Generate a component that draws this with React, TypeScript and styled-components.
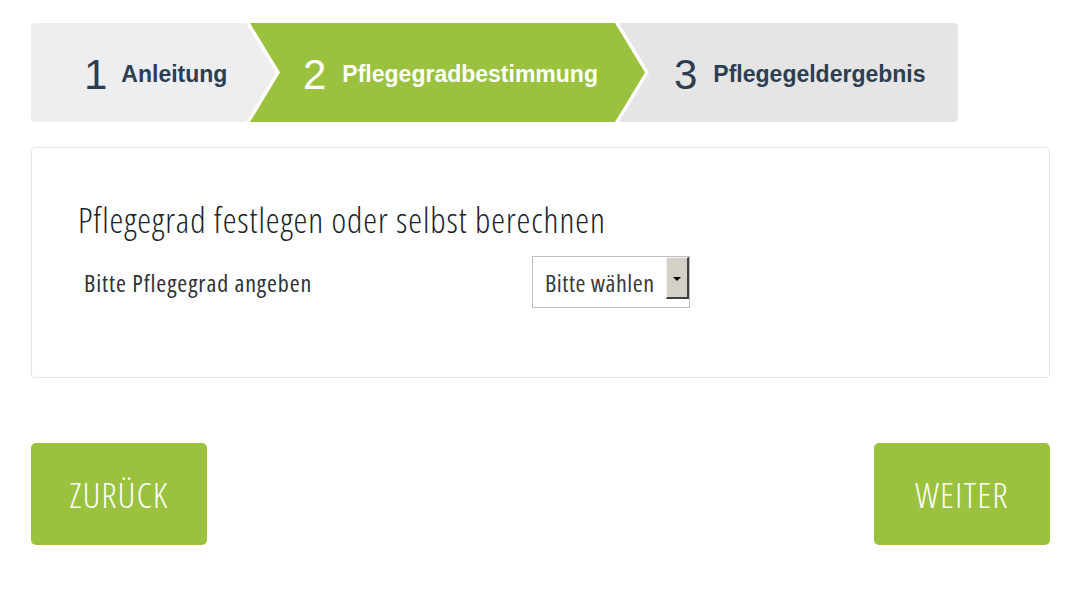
import React from "react";
import styled, { createGlobalStyle } from "styled-components";

const GlobalStyle = createGlobalStyle`
  html, body { margin: 0; padding: 0; background: #ffffff; }
  body { font-family: "Liberation Sans", Arial, sans-serif; }
`;

const GREEN = "#9ac23f";
const DEPTH = 30;

const Page = styled.div`
  width: 1072px;
  height: 590px;
  box-sizing: border-box;
  padding: 23px 22px 0 31px;
  display: flex;
  flex-direction: column;
`;

const Stepper = styled.div`
  display: flex;
  width: 928px;
  height: 99px;
`;

const Step = styled.div<{ $bg: string; $w: number; $first?: boolean; $last?: boolean; $active?: boolean }>`
  flex: 0 0 ${(p) => p.$w}px;
  height: 100%;
  box-sizing: border-box;
  padding-left: ${(p) => (p.$last ? 55 : 53)}px;
  padding-top: 3px;
  margin-left: ${(p) => (p.$first ? 0 : -26)}px;
  display: flex;
  align-items: center;
  gap: ${(p) => (p.$first ? 14 : 16)}px;
  background: ${(p) => p.$bg};
  color: ${(p) => (p.$active ? "#ffffff" : "#2c3e50")};
  border-radius: ${(p) => (p.$first ? "4px 0 0 4px" : p.$last ? "0 4px 4px 0" : "0")};
  clip-path: ${(p) =>
    p.$last
      ? `polygon(0 0, 100% 0, 100% 100%, 0 100%, ${DEPTH}px 50%)`
      : p.$first
      ? `polygon(0 0, calc(100% - ${DEPTH}px) 0, 100% 50%, calc(100% - ${DEPTH}px) 100%, 0 100%)`
      : `polygon(0 0, calc(100% - ${DEPTH}px) 0, 100% 50%, calc(100% - ${DEPTH}px) 100%, 0 100%, ${DEPTH}px 50%)`};
`;

const StepNum = styled.span`
  font-family: "Liberation Sans", Arial, sans-serif;
  font-size: 42px;
  font-weight: 400;
  line-height: 1;
  margin-top: 2px;
`;

const StepLabel = styled.span`
  font-family: "Liberation Sans", Arial, sans-serif;
  font-size: 23px;
  font-weight: 700;
  line-height: 1;
`;

const Card = styled.div`
  margin-top: 25px;
  width: 1019px;
  height: 231px;
  box-sizing: border-box;
  border: 1px solid #e6e6e6;
  border-radius: 4px;
  padding: 50px 46px 0 46px;
`;

const Condensed = `
  font-family: "Open Sans", sans-serif;
  font-stretch: 75%;
`;

const Title = styled.h2`
  ${Condensed}
  font-weight: 300;
  margin: 0;
  font-size: 35px;
  letter-spacing: 0.9px;
  line-height: 44px;
  color: #202329;
`;

const FieldRow = styled.div`
  display: flex;
  align-items: center;
  margin-top: 14px;
`;

const FieldLabel = styled.label`
  ${Condensed}
  font-weight: 400;
  width: 448px;
  padding-left: 6px;
  font-size: 24px;
  letter-spacing: 0.9px;
  color: #2f3237;
`;

const Select = styled.div`
  display: flex;
  align-items: flex-start;
  width: 158px;
  height: 52px;
  box-sizing: border-box;
  border: 1px solid #bfbfbf;
  background: #fff;
`;

const SelectText = styled.span`
  ${Condensed}
  font-weight: 400;
  flex: 1;
  height: 100%;
  display: flex;
  align-items: center;
  padding-left: 12px;
  font-size: 24px;
  letter-spacing: 0.5px;
  color: #3a3a3a;
`;

const SelectButton = styled.span`
  width: 23px;
  height: 42px;
  box-sizing: border-box;
  background: #d4d0c8;
  border-top: 1px solid #f4f2ee;
  border-left: 1px solid #f4f2ee;
  border-right: 2px solid #404040;
  border-bottom: 2px solid #404040;
  display: flex;
  align-items: center;
  justify-content: center;
`;

const Arrow = styled.span`
  width: 0;
  height: 0;
  border-left: 4px solid transparent;
  border-right: 4px solid transparent;
  border-top: 4px solid #000;
  margin-top: 2px;
`;

const Buttons = styled.div`
  margin-top: 65px;
  width: 1019px;
  display: flex;
  justify-content: space-between;
`;

const Button = styled.button`
  ${Condensed}
  font-weight: 300;
  width: 176px;
  height: 102px;
  border: none;
  border-radius: 5px;
  background: ${GREEN};
  color: #ffffff;
  font-size: 35px;
  letter-spacing: 1.4px;
  text-transform: uppercase;
  padding: 0;
  cursor: pointer;
`;

export default function App() {
  return (
    <>
      <GlobalStyle />
      <Page>
        <Stepper>
          <Step $bg="#edeef0" $w={245} $first>
            <StepNum>1</StepNum>
            <StepLabel>Anleitung</StepLabel>
          </Step>
          <Step $bg={GREEN} $w={395} $active>
            <StepNum>2</StepNum>
            <StepLabel>Pflegegradbestimmung</StepLabel>
          </Step>
          <Step $bg="#e5e5e5" $w={339} $last>
            <StepNum>3</StepNum>
            <StepLabel>Pflegegeldergebnis</StepLabel>
          </Step>
        </Stepper>
        <Card>
          <Title>Pflegegrad festlegen oder selbst berechnen</Title>
          <FieldRow>
            <FieldLabel>Bitte Pflegegrad angeben</FieldLabel>
            <Select>
              <SelectText>Bitte wählen</SelectText>
              <SelectButton>
                <Arrow />
              </SelectButton>
            </Select>
          </FieldRow>
        </Card>
        <Buttons>
          <Button>Zurück</Button>
          <Button>Weiter</Button>
        </Buttons>
      </Page>
    </>
  );
}
